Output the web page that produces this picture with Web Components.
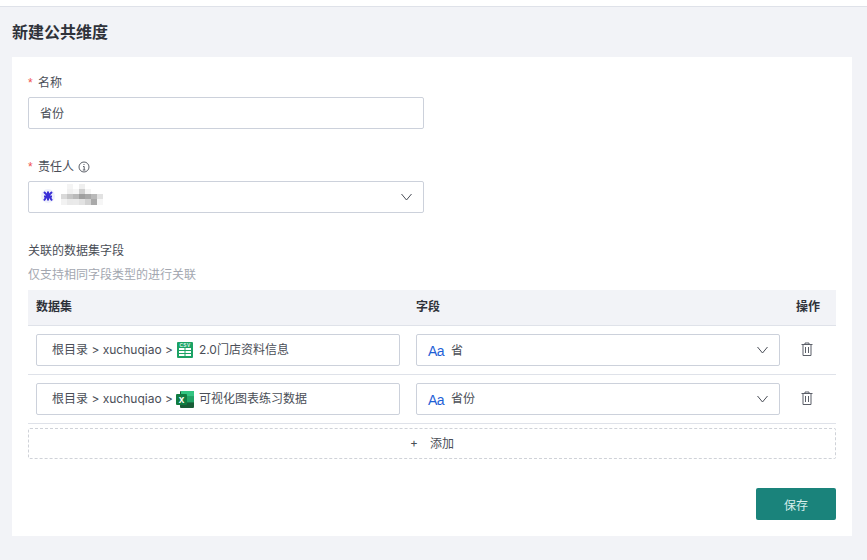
<!DOCTYPE html>
<html><head><meta charset="utf-8"><title>新建公共维度</title>
<style>
html,body{margin:0;padding:0}
body{width:867px;height:560px;overflow:hidden;background:#fff;font-family:Inter,"Noto Sans CJK SC",sans-serif;font-size:12px;color:#4a4e57}
</style></head><body>
<dim-page></dim-page>
<template id="t-page"><style>
:host{display:block;height:560px;box-sizing:border-box;padding-top:6px}
.bg{height:553px;border-top:1px solid #dfe2e9;background:#f2f3f7;padding:0 15px 0 12px;display:flex;flex-direction:column}
h1{margin:0;height:50px;line-height:50px;font-size:16px;font-weight:600;color:#2f323a}
.card{background:#fff;height:479px;box-sizing:border-box;padding:16px 16px 16px;display:flex;flex-direction:column}
.foot{display:flex;justify-content:flex-end;margin-top:29px}
.sec{margin-top:28px;line-height:20px;color:#4a4e57}
.hint{margin-top:4px;line-height:20px;color:#a3a7b0}
.first{--gap:4px;--tp:2px}
.req2{margin-top:28px;--gap:4px}
</style>
<div class="bg"><h1>新建公共维度</h1><div class="card">
<form-field class="first" required label="名称"><text-box>省份</text-box></form-field>
<form-field class="req2" required info label="责任人"><text-box select><owner-mark></owner-mark></text-box></form-field>
<div class="sec">关联的数据集字段</div>
<div class="hint">仅支持相同字段类型的进行关联</div>
<field-table></field-table>
<add-button>添加</add-button>
<div class="foot"><save-button>保存</save-button></div>
</div></div></template>

<template id="t-field"><style>
:host{display:block}
.l{display:flex;align-items:center;height:20px;margin-bottom:var(--gap,5px);line-height:20px;color:#4a4e57}
.s{color:#f0524f;width:10px;font-size:12px;line-height:20px;font-family:"Liberation Sans",sans-serif}
svg{margin-left:4px}
</style><div class="l"><span class="s"></span><span class="t"></span></div><slot></slot></template>

<template id="t-box"><style>
:host{display:flex;align-items:center;box-sizing:border-box;width:396px;height:32px;border:1px solid #ccd1db;border-radius:2px;background:#fff;padding:0 11px;color:#4a4e57;line-height:20px;white-space:nowrap}
:host([w]){width:364px}
.c{flex:1;display:flex;align-items:center;min-width:0;padding-top:var(--tp,0)}
svg.ch{flex:none}
</style><div class="c"><slot></slot></div><svg class="ch" width="12" height="8" viewBox="0 0 12 8" fill="none" stroke="#4a4e57" stroke-width="1"><path d="M1.500 1l5 6 5-6"/></svg></template>

<template id="t-owner"><style>
:host{display:flex;align-items:center;height:30px}
.a{width:14px;height:14px;display:block;margin:0 0 2px 1px;flex:none}
.m{display:block;margin:0 0 6px 6px;flex:none}
</style>
<svg class="a" viewBox="0 0 14 14"><circle cx="7" cy="7" r="7" fill="#eef0fb"/><path d="M3 3l2.500 2.500h3L11 3M7 2.500v9M3 7.500h8M3 11.500l2.500-3.500h3l2.500 3.500" fill="none" stroke="#3a2fd6" stroke-width="2"/></svg>
<svg class="m" width="42" height="21" viewBox="0 0 42 21" shape-rendering="crispEdges">
<rect x="6" y="0" width="6" height="5" fill="#f4f4f4"/><rect x="18" y="0" width="6" height="5" fill="#efefef"/>
<rect x="6" y="5" width="6" height="5" fill="#f0f0f0"/><rect x="12" y="5" width="6" height="5" fill="#f6f6f6"/><rect x="18" y="5" width="6" height="5" fill="#d0d0d0"/><rect x="24" y="5" width="6" height="5" fill="#f4f4f4"/>
<rect x="0" y="10" width="6" height="5" fill="#d9d9d9"/><rect x="6" y="10" width="6" height="5" fill="#c6c6c6"/><rect x="12" y="10" width="6" height="5" fill="#bababa"/><rect x="18" y="10" width="6" height="5" fill="#9f9f9f"/><rect x="24" y="10" width="6" height="5" fill="#a9a9a9"/><rect x="30" y="10" width="6" height="5" fill="#b9b9b9"/><rect x="36" y="10" width="6" height="5" fill="#e2e2e2"/>
<rect x="0" y="15" width="6" height="6" fill="#f2f2f2"/><rect x="6" y="15" width="6" height="6" fill="#e9e9e9"/><rect x="12" y="15" width="6" height="6" fill="#eaeaea"/><rect x="18" y="15" width="6" height="6" fill="#e2e2e2"/><rect x="24" y="15" width="6" height="6" fill="#d2d2d2"/><rect x="30" y="15" width="6" height="6" fill="#a9a9a9"/><rect x="36" y="15" width="6" height="6" fill="#f6f6f6"/>
</svg></template>

<template id="t-table"><style>
:host{display:block;margin-top:5px;width:808px}
.r{display:grid;grid-template-columns:380px 380px 1fr;box-sizing:border-box}
.h{height:36px;background:#f2f3f7;border-bottom:1px solid #dfe2e9;font-weight:600;color:#2f323a;align-items:center;line-height:20px;padding-bottom:2px}
.h>div{padding-left:8px}
.b{height:49px;border-bottom:1px solid #dfe2e9;align-items:center}
.b>*{margin-left:8px}
.p{box-sizing:border-box;width:364px;height:32px;border:1px solid #ccd1db;border-radius:2px;display:flex;align-items:center;padding:0 15px 4px;color:#4a4e57;white-space:nowrap}
.p svg{flex:none;margin:4px 6px 0 4px}
.p svg.x{margin:4px 5px 0 3px}
.b .d{margin:0 0 3px 13px;display:block}
.aa{color:#1f5fd6;font-size:14px;margin-right:7px;width:16px;letter-spacing:-.6px;font-family:"Liberation Sans",sans-serif;position:relative;top:1px}
.tp{--tp:2px}
.tp .aa{top:0}
</style>
<div class="r h"><div>数据集</div><div>字段</div><div>操作</div></div>
<div class="r b"><div class="p">根目录 &gt; xuchuqiao &gt;<svg width="16" height="16" viewBox="0 0 16 16"><rect width="16" height="16" rx="1" fill="#1ba264"/><text x="8" y="4.800" font-size="4.800" font-weight="700" text-anchor="middle" fill="#dff5ea" font-family="Liberation Sans" letter-spacing=".4">CSV</text><path d="M2 6h5.500v2H2zM8.500 6H14v2H8.500zM2 9h5.500v2H2zM8.500 9H14v2H8.500zM2 12h5.500v2H2zM8.500 12H14v2H8.500z" fill="#fff"/></svg><span>2.0门店资料信息</span></div>
<text-box w class="tp"><span class="aa">Aa</span>省</text-box><svg class="d" width="12" height="14" viewBox="0 0 12 14" fill="none" stroke="#5b5f68"><path d="M.500 2.500h11M4 2.500V1h4v1.500M2 2.500v11h8v-11M4.500 5v6M7.500 5v6"/></svg></div>
<div class="r b"><div class="p">根目录 &gt; xuchuqiao &gt;<svg class="x" width="18" height="17" viewBox="0 0 18 17"><rect x="4" width="14" height="17" rx="1" fill="#185c37"/><rect x="5" width="13" height="5.700" fill="#33c481"/><rect x="11" y="5.700" width="7" height="5.700" fill="#21a366"/><rect x="4" y="5.700" width="7" height="5.700" fill="#107c41"/><rect x="0" y="3" width="11" height="11" rx="1" fill="#107c41"/><text x="5.500" y="12" font-size="10" font-weight="700" text-anchor="middle" fill="#fff" font-family="Liberation Sans">x</text></svg><span>可视化图表练习数据</span></div>
<text-box w><span class="aa">Aa</span>省份</text-box><svg class="d" width="12" height="14" viewBox="0 0 12 14" fill="none" stroke="#5b5f68"><path d="M.500 2.500h11M4 2.500V1h4v1.500M2 2.500v11h8v-11M4.500 5v6M7.500 5v6"/></svg></div>
</template>

<template id="t-add"><style>
:host{display:flex;align-items:center;justify-content:center;gap:12px;box-sizing:border-box;width:808px;height:32px;margin-top:4px;padding-bottom:2px;border:1px dashed #cfd2d8;border-radius:2px;color:#4a4e57}
</style><span>+</span><slot></slot></template>

<template id="t-save"><style>
:host{display:flex;align-items:center;justify-content:center;width:80px;height:32px;background:#1a837b;border-radius:2px;color:#d6eeeb}
</style><slot></slot></template>

<script>
function def(name,tid,init){customElements.define(name,class extends HTMLElement{constructor(){super();const r=this.attachShadow({mode:'open'});r.appendChild(document.getElementById(tid).content.cloneNode(true));}connectedCallback(){init&&init(this)}})}
def('form-field','t-field',el=>{const r=el.shadowRoot;r.querySelector('.t').textContent=el.getAttribute('label');if(el.hasAttribute('required'))r.querySelector('.s').textContent='*';if(el.hasAttribute('info')&&!r.querySelector('svg')){r.querySelector('.l').insertAdjacentHTML('beforeend','<svg width="12" height="12" viewBox="0 0 12 12" fill="none" stroke="#5b5f68"><circle cx="6" cy="6" r="5"/><path d="M5 5.500h1.200V9M4.800 9h2.600M6 3v1"/></svg>')}});
def('text-box','t-box',el=>{if(!el.hasAttribute('select')&&!el.hasAttribute('w'))el.shadowRoot.querySelector('svg').remove()});
def('owner-mark','t-owner');
def('field-table','t-table');
def('add-button','t-add');
def('save-button','t-save');
def('dim-page','t-page');
</script>
</body></html>
